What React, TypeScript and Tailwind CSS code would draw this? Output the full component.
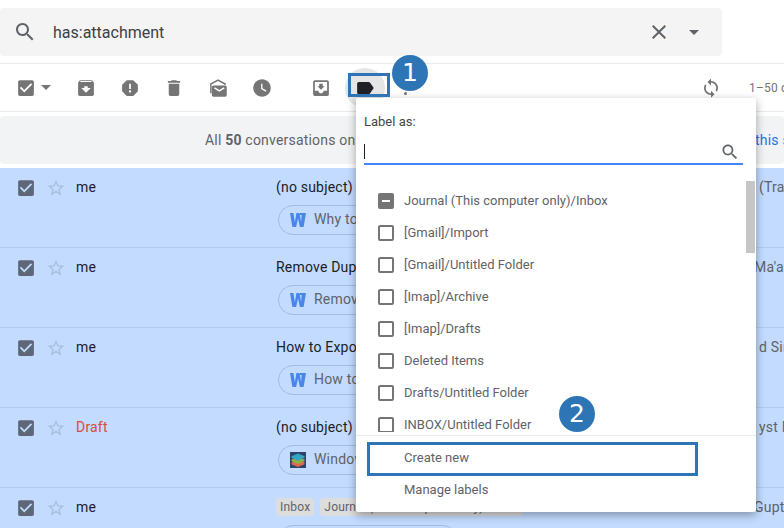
import React from 'react';

const P = {
  check: 'M19 3H5c-1.11 0-2 .9-2 2v14c0 1.1.89 2 2 2h14c1.11 0 2-.9 2-2V5c0-1.1-.89-2-2-2zm-9 14l-5-5 1.41-1.41L10 14.17l7.59-7.59L19 8l-9 9z',
  archive: 'M20.54 5.23l-1.39-1.68C18.88 3.21 18.47 3 18 3H6c-.47 0-.88.21-1.16.55L3.46 5.23C3.17 5.57 3 6.02 3 6.5V19c0 1.1.9 2 2 2h14c1.1 0 2-.9 2-2V6.5c0-.48-.17-.93-.46-1.27zM12 17.5L6.5 12H10v-2h4v2h3.5L12 17.5zM5.12 5l.81-1h12l.94 1H5.12z',
  report: 'M15.73 3H8.27L3 8.27v7.46L8.27 21h7.46L21 15.73V8.27L15.73 3zM12 17.3c-.72 0-1.3-.58-1.3-1.3 0-.72.58-1.3 1.3-1.3.72 0 1.3.58 1.3 1.3 0 .72-.58 1.3-1.3 1.3zm1-4.3h-2V7h2v6z',
  trash: 'M6 19c0 1.1.9 2 2 2h8c1.1 0 2-.9 2-2V7H6v12zM19 4h-3.5l-1-1h-5l-1 1H5v2h14V4z',
  read: 'M12 2 3.500 6.600C3.200 6.800 3 7.200 3 7.600V18h1.600V7.900L12 3.900l7.400 4V8.600h1.600V7.600c0-.4-.2-.8-.5-1L12 2zM7 9c-1.100 0-2 .9-2 2v9c0 1.100.9 2 2 2h13c1.100 0 2-.9 2-2v-9c0-1.100-.9-2-2-2H7zm6.500 7.400L7.400 12.600l1-1.600 5.100 3.200 5.100-3.200 1 1.600-6.100 3.800z',
  clock: 'M11.99 2C6.47 2 2 6.48 2 12s4.47 10 9.99 10C17.52 22 22 17.52 22 12S17.52 2 11.99 2zm4.24 14.24L11 13V7h1.5v5.25l4.5 2.67-.77 1.32z',
  inbox: 'M19 3H4.99c-1.11 0-1.98.89-1.98 2L3 19c0 1.1.88 2 1.99 2H19c1.1 0 2-.9 2-2V5c0-1.11-.9-2-2-2zm0 12h-4c0 1.66-1.35 3-3 3s-3-1.34-3-3H4.99V5H19v10zm-3-5h-2V7h-4v3H8l4 4 4-4z',
  label: 'M17.63 5.84C17.27 5.33 16.67 5 16 5L5 5.01C3.9 5.01 3 5.9 3 7v10c0 1.1.9 1.99 2 1.99L16 19c.67 0 1.27-.33 1.63-.84L22 12l-4.37-6.16z',
  sync: 'M12 4V1L8 5l4 4V6c3.31 0 6 2.69 6 6 0 1.01-.25 1.97-.7 2.8l1.46 1.46C19.54 15.03 20 13.57 20 12c0-4.42-3.58-8-8-8zm0 14c-3.31 0-6-2.69-6-6 0-1.01.25-1.97.7-2.8L5.24 7.74C4.46 8.97 4 10.43 4 12c0 4.42 3.58 8 8 8v3l4-4-4-4v3z',
  search: 'M15.5 14h-.79l-.28-.27C15.41 12.59 16 11.11 16 9.5 16 5.91 13.09 3 9.5 3S3 5.91 3 9.5 5.91 16 9.5 16c1.61 0 3.09-.59 4.23-1.57l.27.28v.79l5 4.99L20.49 19l-4.99-5zm-6 0C7.01 14 5 11.99 5 9.5S7.01 5 9.5 5 14 7.01 14 9.5 11.99 14 9.5 14z',
  star: 'M22 9.24l-7.19-.62L12 2 9.19 8.63 2 9.24l5.46 4.73L5.82 21 12 17.27 18.18 21l-1.63-7.03L22 9.24zM12 15.4l-3.76 2.27 1-4.28-3.32-2.88 4.38-.38L12 6.1l1.71 4.04 4.38.38-3.32 2.88 1 4.28L12 15.4z',
  close: 'M19 6.41L17.59 5 12 10.59 6.41 5 5 6.41 10.59 12 5 17.59 6.41 19 12 13.41 17.59 19 19 17.59 13.41 12z',
};

const Icon = ({ d, className }: { d: string; className: string }) => (
  <svg viewBox="0 0 24 24" fill="currentColor" className={`shrink-0 ${className}`}>
    <path d={d} fillRule="evenodd" />
  </svg>
);

const Caret = () => (
  <div className="w-0 h-0 border-x-[5px] border-x-transparent border-t-[5px] border-t-[#757575]" />
);

const WordIcon = () => (
  <svg viewBox="0 0 16 16" className="w-4 h-4 shrink-0" fill="#4a86e8">
    <path d="M0 1h3.4l1.5 9.2L6.4 1h3.2l1.5 9.2L11.6 3H10V1h6l-2.4 14h-3.7L8 6.5 6.100 15H2.400z" />
  </svg>
);

const StackIcon = () => (
  <svg viewBox="0 0 16 16" className="w-4 h-4 shrink-0">
    <rect width="16" height="16" fill="#2f4468" />
    <path d="M1.500 10.500 8 8l6.500 2.500v1.800L8 15l-6.500-2.700z" fill="#e2674f" />
    <path d="M1.500 7.500 8 5l6.500 2.500v1.800L8 12 1.500 9.300z" fill="#8db04a" />
    <path d="M1.500 4.200 8 1.500l6.500 2.700v1.600L8 8.800 1.500 5.800z" fill="#35a5c5" />
  </svg>
);

const Chip = ({ icon, text }: { icon: React.ReactNode; text: string }) => (
  <div className="ml-[2px] mt-[7px] w-[180px] h-[30px] rounded-full border border-[#a5bbdf] flex items-center gap-[8px] pl-[11px] text-[14px] tracking-[0.2px] text-[#5f6368]">
    {icon}
    <span className="-mt-[2px]">{text}</span>
  </div>
);

const Tag = ({ text }: { text: string }) => (
  <span className="h-[18px] leading-[18px] rounded-[4px] bg-[#dddddd] px-[4px] text-[12px] tracking-[0.2px] text-[#5f6368] shrink-0">{text}</span>
);

const rows = [
  { sender: 'me', subject: '(no subject)', tail: '(Tra', tailWidth: 'w-[25px]', chip: 'Why to Choose' },
  { sender: 'me', subject: 'Remove Duplicates', tail: "Ma'an", tailWidth: 'w-[30px]', chip: 'Remove Dupes' },
  { sender: 'me', subject: 'How to Export', tail: 'd Sim', tailWidth: 'w-[25px]', chip: 'How to Export' },
  { sender: 'Draft', subject: '(no subject)', tail: 'yst I', tailWidth: 'w-[25px]', chip: 'Windows' },
  { sender: 'me', subject: '', tail: 'Gupta', tailWidth: 'w-[30px]', chip: 'Windows' },
];

const labels = [
  'Journal (This computer only)/Inbox',
  '[Gmail]/Import',
  '[Gmail]/Untitled Folder',
  '[Imap]/Archive',
  '[Imap]/Drafts',
  'Deleted Items',
  'Drafts/Untitled Folder',
  'INBOX/Untitled Folder',
];

const toolbarIcons = [P.archive, P.report, P.trash, P.read, P.clock];

export default function App() {
  return (
    <div className="relative w-[784px] h-[528px] overflow-hidden bg-white font-['Roboto',sans-serif] text-[14px] tracking-[0.2px] text-[#202124]">
      {/* search */}
      <div className="pt-2 h-[63px]">
        <div className="w-[722px] h-12 rounded-[4px] bg-[#f4f4f4] flex items-center pl-[13px] pr-[16px]">
          <Icon d={P.search} className="w-6 h-6 text-[#5f6368]" />
          <span className="ml-[16px] mt-[1px] text-[16px] tracking-normal text-[#3c4043]">has:attachment</span>
          <Icon d={P.close} className="ml-auto w-6 h-6 text-[#5f6368]" />
          <div className="ml-[18px] mr-[7px] w-0 h-0 border-x-[5px] border-x-transparent border-t-[5px] border-t-[#5f6368]" />
        </div>
      </div>

      {/* toolbar */}
      <div className="h-[49px] border-y border-[#e8eaed] flex items-center pl-[14px] text-[#757575]">
        <Icon d={P.check} className="w-6 h-6 p-[1.5px]" />
        <div className="ml-[3px] mr-[23px]"><Caret /></div>
        <div className="flex items-center gap-5">
          {toolbarIcons.map((d, i) => (
            <Icon key={i} d={d} className="w-6 h-6 p-[1.5px]" />
          ))}
        </div>
        <div className="ml-[17px] mr-[18px] w-px h-5 bg-[#e5e5e5]" />
        <Icon d={P.inbox} className="w-6 h-6 p-[1.5px]" />
        <div className="ml-[12px] w-10 h-10 shrink-0 rounded-full bg-[#e5e5e5] flex items-center justify-center">
          <Icon d={P.label} className="w-6 h-6 p-[1.5px] text-[#202124]" />
        </div>
        <div className="ml-[8px] w-6 shrink-0 flex flex-col items-center gap-[3px]">
          {[0, 1, 2].map((i) => (
            <div key={i} className="w-[3px] h-[3px] rounded-full bg-[#757575]" />
          ))}
        </div>
        <Icon d={P.sync} className="ml-[282px] w-6 h-6 p-[1.5px]" />
        <span className="ml-[26px] text-[12px] whitespace-nowrap text-[#757575]">1–50 of 50</span>
      </div>

      {/* banner */}
      <div className="mt-1 h-12 rounded-[4px] bg-[#f2f3f5] flex items-center justify-between pl-[205px] text-[#5f6368]">
        <span className="whitespace-nowrap">All <b className="font-bold">50</b> conversations on this page</span>
        <span className="w-[29px] overflow-hidden whitespace-nowrap text-[#1a73e8]">this search</span>
      </div>

      {/* message list */}
      <div className="mt-1">
        {rows.map((r, i) => (
          <div key={i} className="h-20 bg-[#c2dbff] border-b border-[#b3cbee] flex pl-[14px] pt-[8px]">
            <Icon d={P.check} className="w-6 h-6 p-[1.5px] text-[#5d6778]" />
            <Icon d={P.star} className="ml-[8px] w-5 h-5 mt-[2px] text-[#aac0dd]" />
            <div className={`ml-[10px] w-[200px] leading-[22px] ${r.sender === 'Draft' ? 'text-[#dd4b39]' : 'text-[#202124]'}`}>
              {r.sender}
            </div>
            <div className="w-[508px] shrink-0">
              <div className="h-[22px] leading-[22px] flex items-center justify-between">
                {r.subject ? (
                  <span className="whitespace-nowrap">{r.subject}</span>
                ) : (
                  <div className="flex gap-[6px]">
                    <Tag text="Inbox" />
                    <Tag text="Journal (This computer only)/Inbox" />
                  </div>
                )}
                <span className={`${r.tailWidth} overflow-hidden whitespace-nowrap text-[#5f6368]`}>{r.tail}</span>
              </div>
              <Chip icon={i === 3 || i === 4 ? <StackIcon /> : <WordIcon />} text={r.chip} />
            </div>
          </div>
        ))}
      </div>

      {/* label menu */}
      <div className="absolute left-[356px] top-[98px] w-[400px] h-[414px] bg-white rounded-[2px] shadow-[0_3px_10px_rgba(0,0,0,0.35)] text-[13px] tracking-normal text-[#5f6368] flex flex-col">
        <div className="px-2 pt-[15px]">
          <div className="h-[18px] leading-[18px] text-[#444746]">Label as:</div>
          <div className="mt-[7px] w-[379px] h-[27px] border-b-2 border-[#4285f4] flex items-center justify-between">
            <div className="w-px h-[15px] bg-[#202124] mt-[2px]" />
            <Icon d={P.search} className="w-5 h-5 mr-[3px] text-[#5f6368] mt-[2px]" />
          </div>
        </div>
        <div className="relative mt-[16px] h-[251px] overflow-hidden pt-[4px]">
          {labels.map((l, i) => (
            <div key={l} className="h-8 flex items-center pl-[22px] gap-[10px] whitespace-nowrap">
              {i === 0 ? (
                <div className="w-4 h-4 rounded-[2px] bg-[#757575] flex items-center justify-center">
                  <div className="w-2 h-[2px] bg-white" />
                </div>
              ) : (
                <div className="w-4 h-4 rounded-[2px] border-2 border-[#757575]" />
              )}
              <span>{l}</span>
            </div>
          ))}
          <div className="absolute right-[1px] top-0 w-[9px] h-[72px] bg-[#c6c6c6]" />
        </div>
        <div className="mt-[3px] border-t border-[#e8eaed] pt-[6px]">
          <div className="h-8 leading-8 pl-[48px]">Create new</div>
          <div className="h-8 leading-8 pl-[48px]">Manage labels</div>
        </div>
      </div>

      {/* callouts */}
      <div className="absolute left-[348px] top-[73px] w-[42px] h-6 border-[3px] border-[#2e75b6]" />
      <div className="absolute left-[367px] top-[442px] w-[331px] h-[34px] border-[3px] border-[#2e75b6]" />
      <div className="absolute left-[392px] top-[55px] w-9 h-9 rounded-full bg-[#2e75b6] flex items-center justify-center text-white text-[25px] font-['DejaVu_Sans',sans-serif]">1</div>
      <div className="absolute left-[559px] top-[396px] w-9 h-9 rounded-full bg-[#2e75b6] flex items-center justify-center text-white text-[25px] font-['DejaVu_Sans',sans-serif]">2</div>
    </div>
  );
}
